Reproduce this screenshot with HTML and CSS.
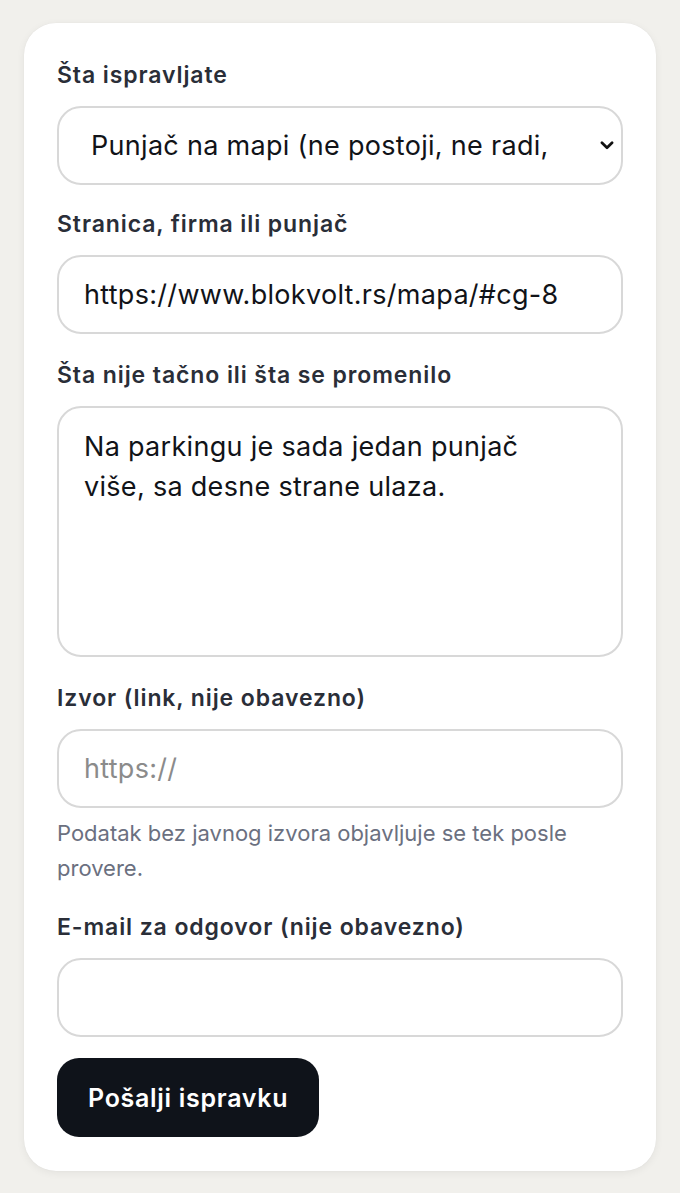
FILE: index.html
```html
<!DOCTYPE html>
<html lang="sr">
<head>
<meta charset="utf-8">
<title>Ispravka</title>
<link rel="stylesheet" href="styles.css">
</head>
<body>
<main class="card">
  <form class="form">
    <div class="field">
      <label class="label" for="what">Šta ispravljate</label>
      <div class="select-wrap">
        <select id="what" class="control select">
          <option>Punjač na mapi (ne postoji, ne radi, pogrešni podaci)</option>
        </select>
        <svg class="chevron" viewBox="0 0 12 8" width="14" height="9" aria-hidden="true"><path d="M1.5 1.5 L6 6 L10.5 1.5" fill="none" stroke="#111" stroke-width="2.4" stroke-linecap="round" stroke-linejoin="round"/></svg>
      </div>
    </div>
    <div class="field">
      <label class="label" for="page">Stranica, firma ili punjač</label>
      <input id="page" class="control" type="text" value="https://www.blokvolt.rs/mapa/#cg-8">
    </div>
    <div class="field">
      <label class="label" for="desc">Šta nije tačno ili šta se promenilo</label>
      <textarea id="desc" class="control area">Na parkingu je sada jedan punjač više, sa desne strane ulaza.</textarea>
    </div>
    <div class="field">
      <label class="label" for="src">Izvor (link, nije obavezno)</label>
      <input id="src" class="control" type="text" placeholder="https://">
      <p class="help">Podatak bez javnog izvora objavljuje se tek posle provere.</p>
    </div>
    <div class="field">
      <label class="label" for="mail">E-mail za odgovor (nije obavezno)</label>
      <input id="mail" class="control" type="email">
    </div>
    <button class="submit" type="button">Pošalji ispravku</button>
  </form>
</main>
</body>
</html>
```
FILE: styles.css
```css
html, body {
  margin: 0;
  padding: 0;
}
body {
  background: #f1f0ec;
  font-family: "Inter", "Noto Sans", sans-serif;
  color: #111318;
  padding: 23px 24px;
}
.card {
  background: #ffffff;
  border-radius: 32px;
  box-shadow: 0 2px 8px rgba(0, 0, 0, 0.06), 0 0 1px rgba(0, 0, 0, 0.08);
  padding: 37px 33px 34px;
}
.form {
  display: flex;
  flex-direction: column;
}
.field {
  display: flex;
  flex-direction: column;
  margin-bottom: 26px;
}
.field:first-child {
  margin-bottom: 24px;
}
.label {
  font-size: 23px;
  font-weight: 600;
  line-height: 30px;
  letter-spacing: 0.9px;
  color: #2a2e38;
  margin-bottom: 16px;
}
.control {
  box-sizing: border-box;
  width: 100%;
  height: 79px;
  border: 2px solid #d8d8d8;
  border-radius: 24px;
  background: #fff;
  font-family: inherit;
  font-size: 27px;
  letter-spacing: 0.3px;
  color: #111318;
  padding: 0 25px;
  outline: none;
}
.control::placeholder {
  color: #8b8b8b;
}
.select-wrap {
  position: relative;
}
.select {
  appearance: none;
  -webkit-appearance: none;
  padding: 0 71px 0 32px;
}
.chevron {
  position: absolute;
  right: 9px;
  top: 35px;
}
.area {
  height: 251px;
  padding: 19px 50px 19px 25px;
  line-height: 40px;
  resize: none;
}
.help {
  margin: 8px 0 0;
  font-size: 22px;
  line-height: 35px;
  color: #6b7080;
}
.submit {
  align-self: flex-start;
  height: 79px;
  padding: 0 31px;
  border: none;
  border-radius: 22px;
  background: #0f131a;
  color: #fff;
  font-family: inherit;
  font-size: 25px;
  font-weight: 600;
  letter-spacing: 0.7px;
  margin-top: -5px;
}
```
